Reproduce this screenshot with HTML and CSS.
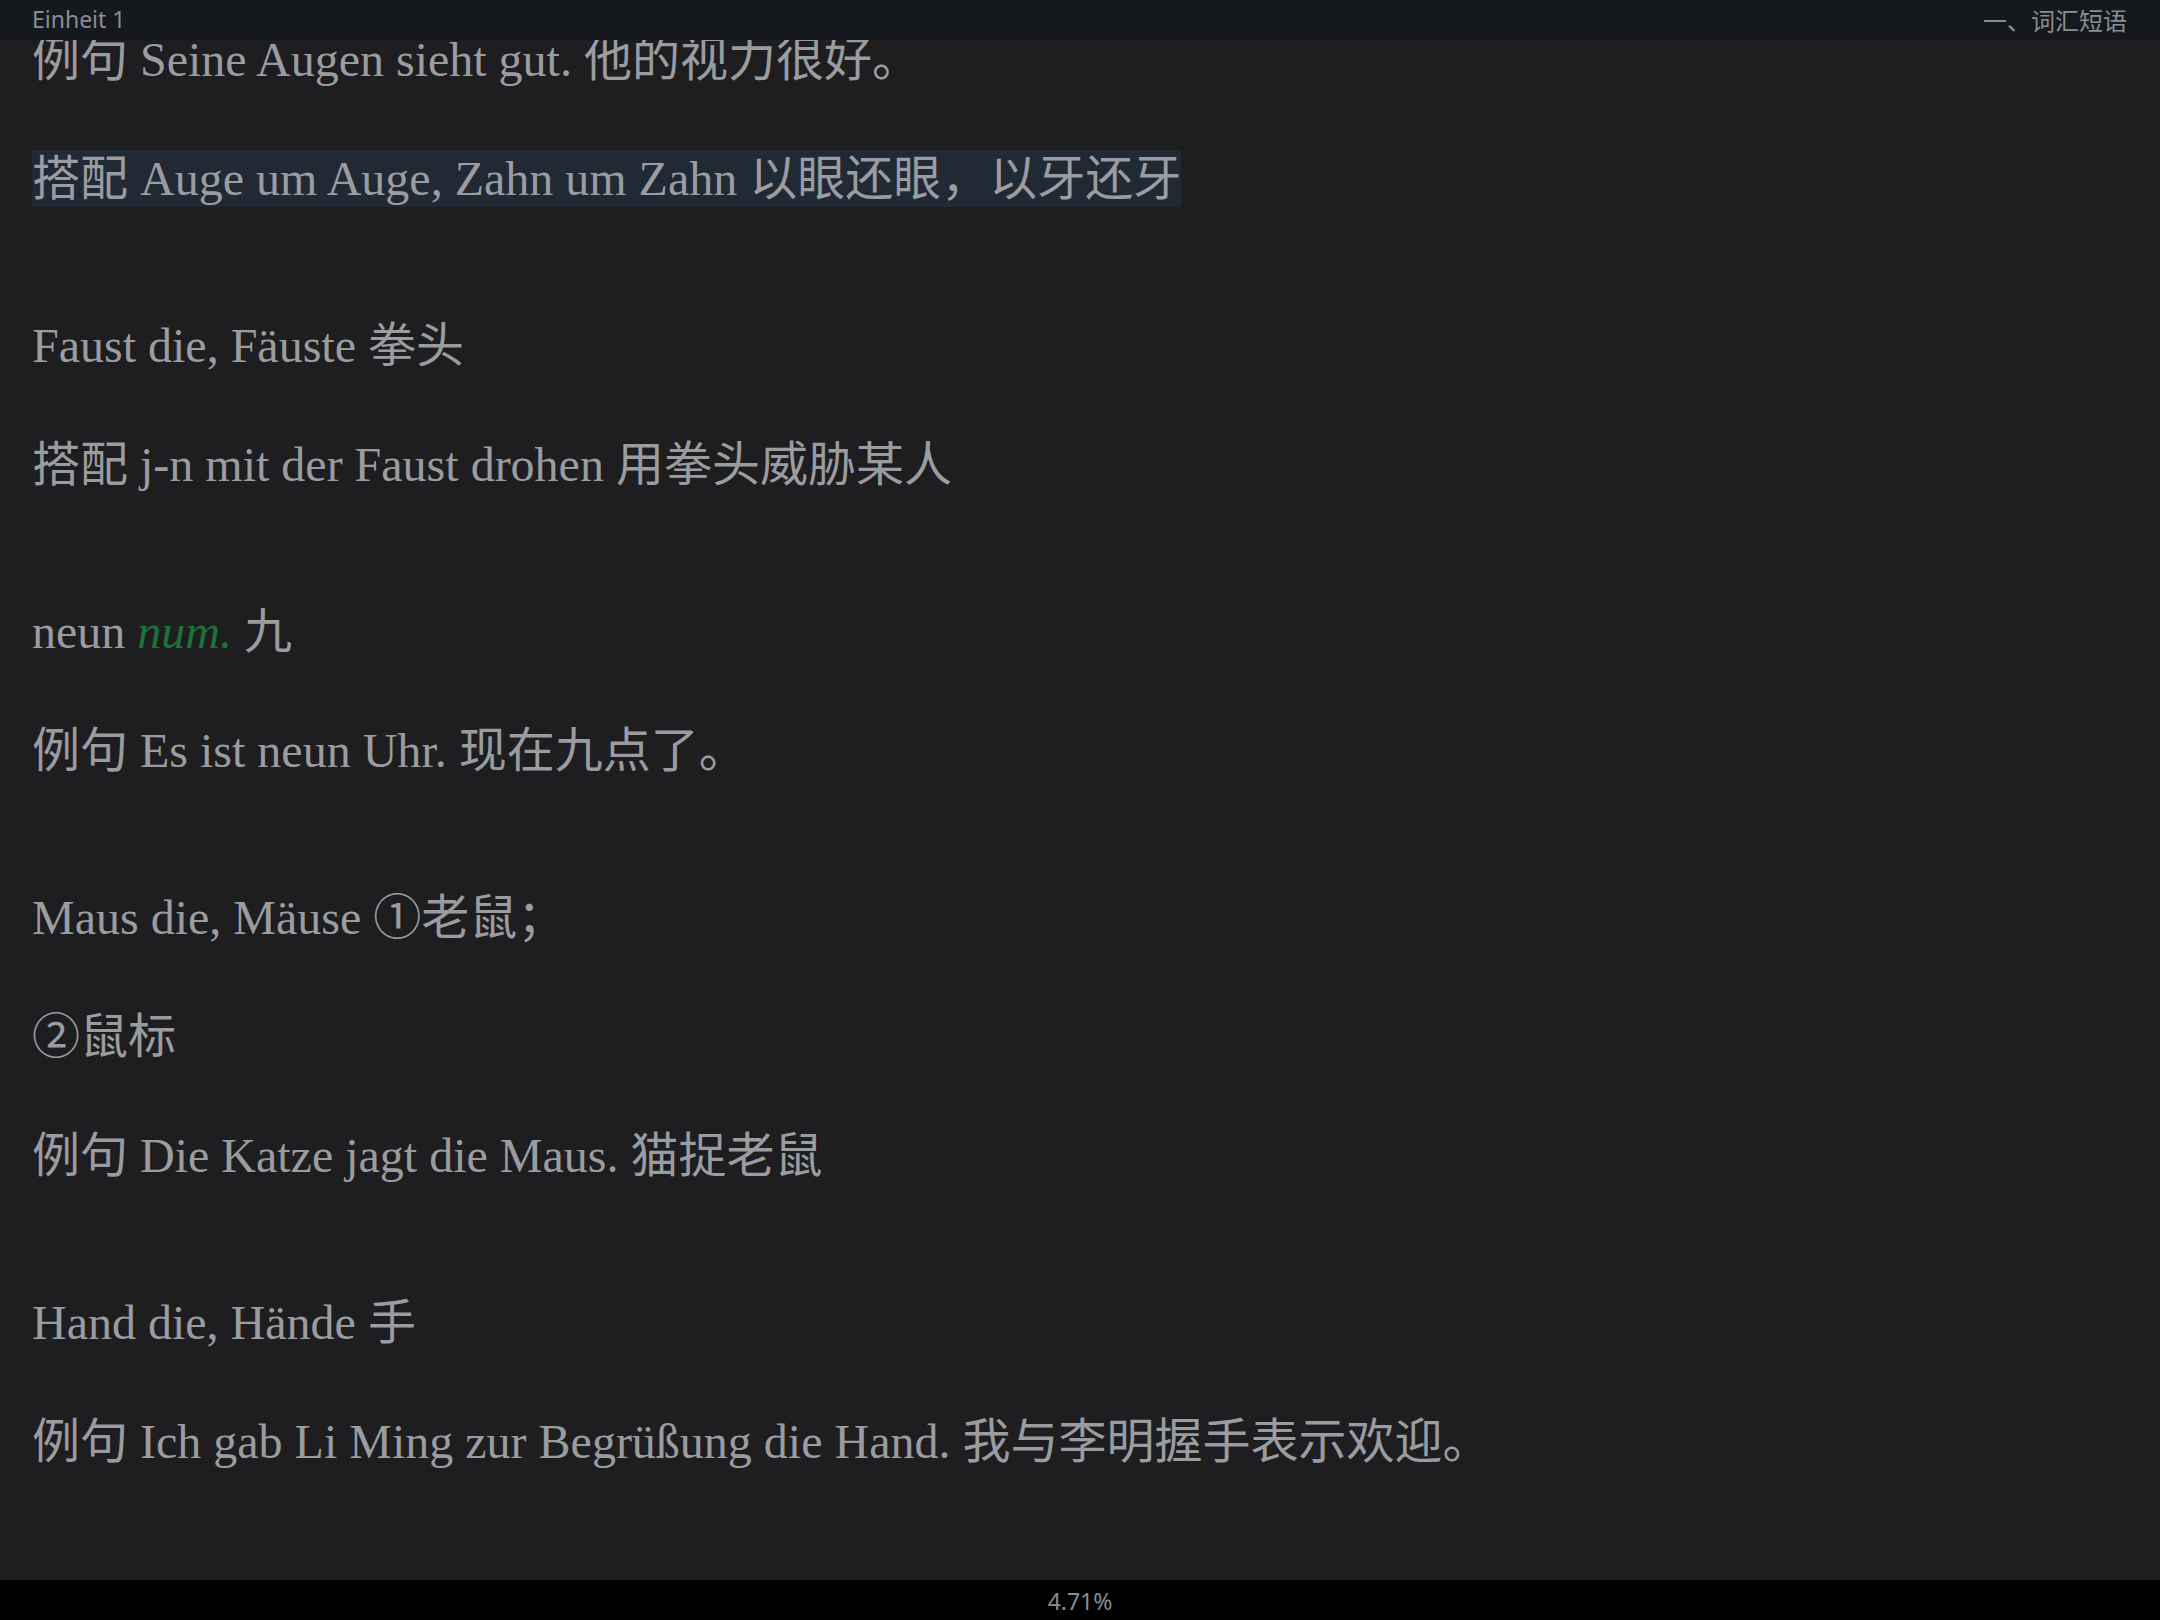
FILE: index.html
```html
<!DOCTYPE html>
<html lang="zh">
<head>
<meta charset="utf-8" />
<title>Einheit 1</title>
<link rel="stylesheet" href="styles.css">
</head>
<body>
<div id="reader">
    <div id="top">
        <span class="chapter">Einheit 1</span>
        <span class="section">一、词汇短语</span>
    </div>
    <div id="main">
        <div class="page">
            <div class="entry">
                <p>例句 Seine Augen sieht gut. 他的视力很好。</p>
                <p><span class="mark">搭配 Auge um Auge, Zahn um Zahn 以眼还眼，以牙还牙</span></p>
            </div>
            <div class="entry">
                <p>Faust die, Fäuste 拳头</p>
                <p>搭配 j-n mit der Faust drohen 用拳头威胁某人</p>
            </div>
            <div class="entry">
                <p>neun <i class="pos">num.</i> 九</p>
                <p>例句 Es ist neun Uhr. 现在九点了。</p>
            </div>
            <div class="entry">
                <p>Maus die, Mäuse ①老鼠；</p>
                <p>②鼠标</p>
                <p>例句 Die Katze jagt die Maus. 猫捉老鼠</p>
            </div>
            <div class="entry">
                <p>Hand die, Hände 手</p>
                <p>例句 Ich gab Li Ming zur Begrüßung die Hand. 我与李明握手表示欢迎。</p>
            </div>
        </div>
    </div>
    <div id="footer">4.71%</div>
</div>
</body>
</html>
```

FILE: styles.css
```css
html, body {
    margin: 0;
    padding: 0;
    height: 100%;
    background-color: #1e1e20;
}
p {
    margin: 0;
}
#reader {
    height: 100vh;
    display: flex;
    flex-direction: column;
    overflow: hidden;
}
#top {
    height: 40px;
    flex: none;
    display: flex;
    justify-content: space-between;
    align-items: center;
    padding: 0 33px 2px 32px;
    box-sizing: border-box;
    background-color: #15191e;
    color: #8a8d92;
    font-family: "Noto Sans", "Noto Sans CJK SC", sans-serif;
    font-size: 23px;
    position: relative;
    z-index: 1;
}
#top .section {
    font-size: 24px;
}
#main {
    flex: 1;
    overflow: hidden;
}
.page {
    margin-top: -16px;
    padding: 0 32px;
    display: flex;
    flex-direction: column;
    gap: 95px;
    color: #9a9ca0;
    font-family: "Liberation Serif", "Noto Sans CJK SC", serif;
    font-size: 48px;
    line-height: 72px;
}
.entry {
    display: flex;
    flex-direction: column;
    gap: 47px;
}
.entry p {
    white-space: nowrap;
}
.mark {
    background-color: #212935;
    padding: 2px 0;
}
.pos {
    color: #1b7337;
}
#footer {
    height: 40px;
    flex: none;
    background-color: #000;
    color: #8a8d92;
    font-family: "Noto Sans", sans-serif;
    font-size: 23px;
    line-height: 42px;
    text-align: center;
}
```
